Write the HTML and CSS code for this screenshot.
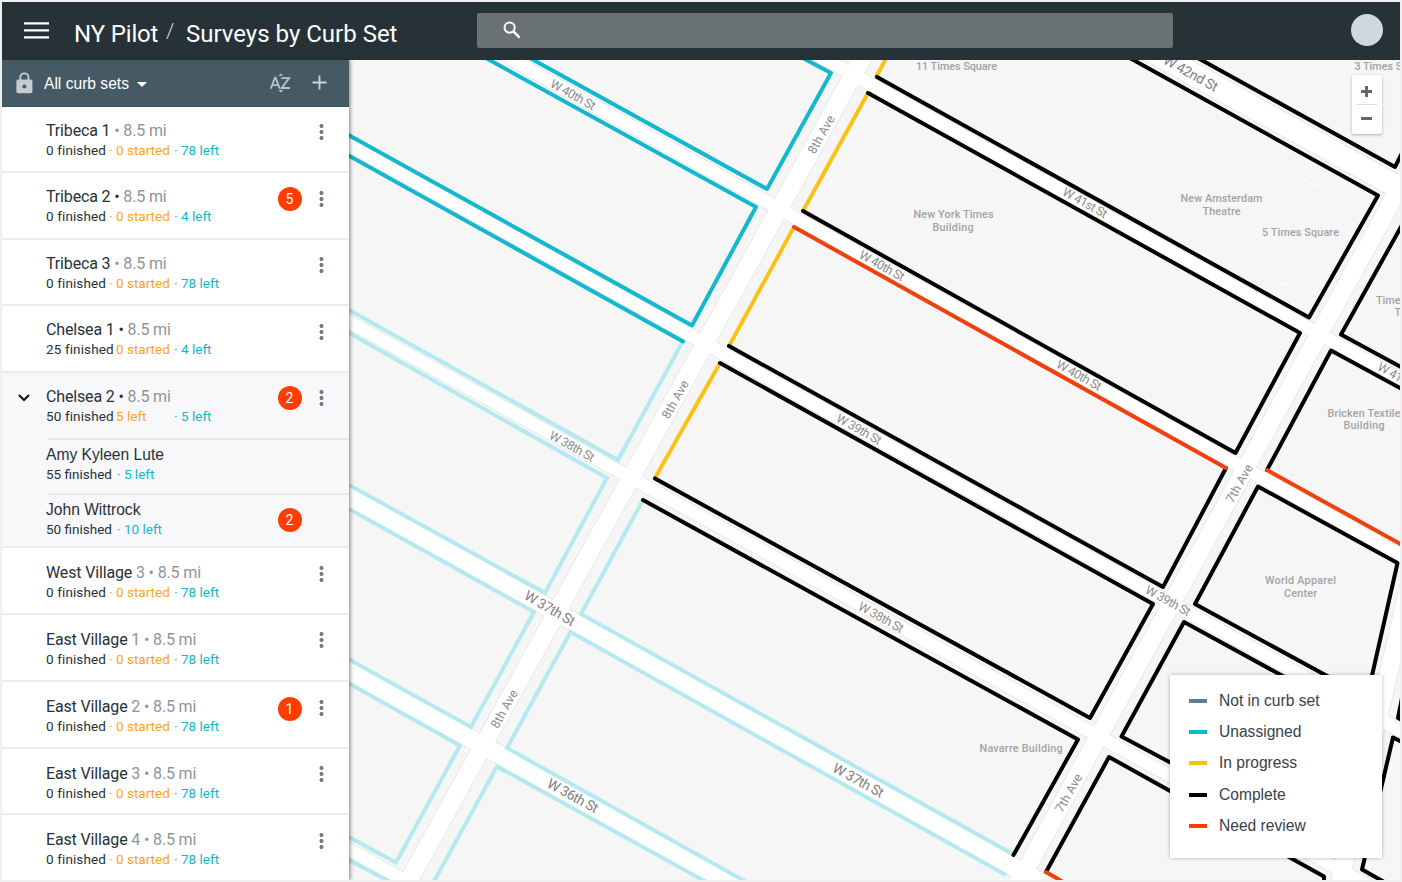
FILE: index.html
```html
<!DOCTYPE html>
<html lang="en">
<head>
<meta charset="utf-8">
<title>NY Pilot / Surveys by Curb Set</title>
<link rel="stylesheet" href="styles.css">
</head>
<body>
<div class="app">
  <header class="topbar">
    <svg class="menu" width="25" height="17" viewBox="0 0 25 17"><path d="M0 1.4h25M0 8.4h25M0 15.4h25" stroke="#fff" stroke-width="2.2"/></svg>
    <h1 class="crumbs"><span class="crumb-root">NY Pilot</span><span class="slash">/</span><span class="crumb-page">Surveys by Curb Set</span></h1>
    <div class="search"><svg width="18" height="18" viewBox="0 0 18 18" fill="none" stroke="#fff"><circle cx="6.6" cy="6.6" r="5.1" stroke-width="2"/><path d="M10.6 10.6l6 6" stroke-width="2.6"/></svg></div>
    <div class="avatar"></div>
  </header>
  <div class="body">
    <aside class="sidebar">
      <div class="filter">
        <svg class="lock" width="17" height="22" viewBox="0 0 17 22"><path d="M4.300 8V5.400a4.100 4.100 0 0 1 8.200 0V8" fill="none" stroke="#c5cdd1" stroke-width="1.800"/><rect x="0.400" y="7.400" width="16" height="13.800" rx="1.800" fill="#c5cdd1"/><circle cx="8.400" cy="14.400" r="2" fill="#455a64"/></svg>
        <span class="filter-label">All curb sets</span>
        <svg class="caret" width="10" height="5" viewBox="0 0 10 5"><path d="M0 0h10L5 5z" fill="#fff"/></svg>
        <svg class="sort" width="21" height="20" viewBox="0 0 21 20" fill="none" stroke="#b9c3c8" stroke-width="1.800"><path d="M.8 15.700L5 4.600h.6L9.800 15.700M2.300 12.200h6"/><path d="M11.300 5.100h7.800l-7.400 9.900h8.200" /><path d="M8.300 2.800L10.800 .4l2.500 2.400zM8.300 17l2.500 2.400L13.300 17z" fill="#b9c3c8" stroke="none"/></svg>
        <svg class="plus" width="15" height="15" viewBox="0 0 15 15"><path d="M7.500 .5v14M.5 7.500h14" stroke="#cfd6d9" stroke-width="1.800"/></svg>
      </div>
      <div class="row"><div class="info"><div class="name">Tribeca 1 <i>• 8.5 mi</i></div><div class="stats"><span class="done">0 finished</span><span class="started"><b>·</b>0 started</span><span class="left"><b>·</b>78 left</span></div></div><span class="kebab"></span></div>
      <div class="row"><div class="info"><div class="name">Tribeca 2 • <i>8.5 mi</i></div><div class="stats"><span class="done">0 finished</span><span class="started"><b>·</b>0 started</span><span class="left"><b>·</b>4 left</span></div></div><span class="badge">5</span><span class="kebab"></span></div>
      <div class="row"><div class="info"><div class="name">Tribeca 3 <i>• 8.5 mi</i></div><div class="stats"><span class="done">0 finished</span><span class="started"><b>·</b>0 started</span><span class="left"><b>·</b>78 left</span></div></div><span class="kebab"></span></div>
      <div class="row"><div class="info"><div class="name">Chelsea 1 • <i>8.5 mi</i></div><div class="stats"><span class="done">25 finished</span><span class="started"><b></b>0 started</span><span class="left"><b>·</b>4 left</span></div></div><span class="kebab"></span></div>
      <div class="row open"><svg class="chevron" width="12" height="8" viewBox="0 0 12 8"><path d="M1 1l5 5 5-5" fill="none" stroke="#111" stroke-width="2"/></svg><div class="info"><div class="name">Chelsea 2 • <i>8.5 mi</i></div><div class="stats"><span class="done">50 finished</span><span class="started"><b></b>5 left</span><span class="left"><b>·</b>5 left</span></div></div><span class="badge">2</span><span class="kebab"></span></div>
      <div class="child"><div class="info"><div class="name">Amy Kyleen Lute</div><div class="stats"><span>55 finished</span><span class="left"><b>·</b>5 left</span></div></div></div>
      <div class="child last"><div class="info"><div class="name">John Wittrock</div><div class="stats"><span>50 finished</span><span class="left"><b>·</b>10 left</span></div></div><span class="badge">2</span></div>
      <div class="row lower"><div class="info"><div class="name">West Village <i>3 • 8.5 mi</i></div><div class="stats"><span class="done">0 finished</span><span class="started"><b>·</b>0 started</span><span class="left"><b>·</b>78 left</span></div></div><span class="kebab"></span></div>
      <div class="row lower tall"><div class="info"><div class="name">East Village <i>1 • 8.5 mi</i></div><div class="stats"><span class="done">0 finished</span><span class="started"><b>·</b>0 started</span><span class="left"><b>·</b>78 left</span></div></div><span class="kebab"></span></div>
      <div class="row lower"><div class="info"><div class="name">East Village <i>2 • 8.5 mi</i></div><div class="stats"><span class="done">0 finished</span><span class="started"><b>·</b>0 started</span><span class="left"><b>·</b>78 left</span></div></div><span class="badge">1</span><span class="kebab"></span></div>
      <div class="row lower"><div class="info"><div class="name">East Village <i>3 • 8.5 mi</i></div><div class="stats"><span class="done">0 finished</span><span class="started"><b>·</b>0 started</span><span class="left"><b>·</b>78 left</span></div></div><span class="kebab"></span></div>
      <div class="row lower"><div class="info"><div class="name">East Village <i>4 • 8.5 mi</i></div><div class="stats"><span class="done">0 finished</span><span class="started"><b>·</b>0 started</span><span class="left"><b>·</b>78 left</span></div></div><span class="kebab"></span></div>
    </aside>
    <main class="map">
      <svg class="streets" width="1051" height="820" viewBox="349 60 1051 820">
        <defs>
          <g id="narrow"><path d="M764 25L1420 390"/><path d="M510 58.700L1420 566"/><path d="M340 140L1420 741.500"/><path d="M340 317L1420 914"/><path d="M340 844.500L420 889"/></g>
          <g id="wide"><path d="M340 491.500L1040 882"/><path d="M340 666L740 889"/></g>
          <g id="avenue"><path d="M873 39L403 891"/><path d="M1481 39L1014 891"/><path d="M1425 518L1338 890"/></g>
          <path id="w42" d="M1148 49L1420 199.600"/>
        </defs>
        <g fill="none" stroke="#e7e9e9">
          <use href="#narrow" stroke-width="14.500"/><use href="#wide" stroke-width="20"/><use href="#avenue" stroke-width="19.500"/><use href="#w42" stroke-width="24"/>
        </g>
        <g fill="none" stroke="#fff">
          <use href="#narrow" stroke-width="12.500"/><use href="#wide" stroke-width="18"/><use href="#avenue" stroke-width="17.500"/><use href="#w42" stroke-width="22"/>
        </g>
        <g class="paths">
          <path d="M724 217q1 6 6 4M733 220q6-3 12-4M797 239l16 8M1300 177l23 12M1278 288l8-6 4 5M1181 463l4-6M1252 512l5-10" stroke="#fff" stroke-width="1.500" stroke-dasharray="3 2"/>
        </g>
        <g class="curb assigned-soft">
          <path d="M349 310L618 460L683 341"/><path d="M349 333L607 478L545 593L349 485"/><path d="M349 509L534 612L471 727L349 659.500"/><path d="M349 683.500L460 745.500L396 862.500L349 837"/><path d="M340 855L390 882"/>
          <path d="M643 500L581 614L1013 854"/><path d="M1006 875L570.500 632L507 748L750 884"/><path d="M432 885L497 766.500L710 884"/>
        </g>
        <g class="curb unassigned">
          <path d="M800 56.500L831 73L767 189L529 57.500"/><path d="M484 57L756 207L692 325.500L345 133"/><path d="M345 153.500L683 341.500"/>
        </g>
        <g class="curb progress"><path d="M887 57L876 77M868 93L803 211M794 227L729 346M720 363L655 478"/></g>
        <g class="curb complete">
          <path d="M877 77L1309 317.500L1378 195.500L1128 57"/><path d="M868 93L1300 333L1235.500 453L803 211"/><path d="M1226 468L1163 587L729 346"/><path d="M720 363L1153 604L1090 718L655 478.500"/><path d="M643 500L1078 739.500L1013.500 855"/>
          <path d="M1196 57L1395 167L1402 153"/><path d="M1402 225L1341 334.500L1402 367.500"/><path d="M1402 389L1331 350.500L1267 470"/>
          <path d="M1371 680L1397.500 563L1258 486.500L1195 604L1340 683"/><path d="M1290 680L1184 622L1121.500 736.500L1190 773"/><path d="M1046 872L1109 757L1324 876.500V882"/>
          <path d="M1402 698L1398 718L1402 720"/><path d="M1402 742L1393 737.500L1362 869.500L1386 883"/>
        </g>
        <g class="curb review"><path d="M794 227L1226 468M1267 470L1404 546M1046 872L1070 886"/></g>
        <g class="street-name">
          <text transform="translate(571 98.500) rotate(29)" textLength="49.500">W 40th St</text>
          <text transform="translate(880 269.500) rotate(29)" textLength="49.500">W 40th St</text>
          <text transform="translate(1077 379) rotate(29)" textLength="49.500">W 40th St</text>
          <text transform="translate(1083 206.500) rotate(29)" textLength="49">W 41st St</text>
          <text transform="translate(857 433) rotate(29)" textLength="49.500">W 39th St</text>
          <text transform="translate(1166 604.500) rotate(29)" textLength="49.500">W 39th St</text>
          <text transform="translate(879 621) rotate(29)" textLength="49.500">W 38th St</text>
          <text transform="translate(570 450) rotate(29)" textLength="49.500">W 38th St</text>
          <text transform="translate(1398 381.500) rotate(29)" textLength="49">W 41st St</text>
          <g class="major">
            <text transform="translate(547.500 612.500) rotate(30)" textLength="56">W 37th St</text>
            <text transform="translate(856 784.500) rotate(29)" textLength="56">W 37th St</text>
            <text transform="translate(570.500 800) rotate(29)" textLength="56">W 36th St</text>
            <text transform="translate(1188.500 77.500) rotate(29)" textLength="60">W 42nd St</text>
          </g>
          <text transform="translate(825 136.500) rotate(-61)" textLength="42">8th Ave</text>
          <text transform="translate(679 401.500) rotate(-61)" textLength="42">8th Ave</text>
          <text transform="translate(508 711) rotate(-61)" textLength="42">8th Ave</text>
          <text transform="translate(1243 485.500) rotate(-61)" textLength="42">7th Ave</text>
          <text transform="translate(1072.500 795) rotate(-61)" textLength="42">7th Ave</text>
        </g>
        <g class="place">
          <text x="956.500" y="70" textLength="81">11 Times Square</text>
          <text x="1392" y="70" textLength="75">3 Times Square</text>
          <text x="953.500" y="218" textLength="80">New York Times</text><text x="953" y="230.500" textLength="41">Building</text>
          <text x="1221.500" y="202" textLength="82">New Amsterdam</text><text x="1221.500" y="214.500" textLength="38">Theatre</text>
          <text x="1300.500" y="236" textLength="77">5 Times Square</text>
          <g class="edge"><text x="1376" y="304">Time</text><text x="1394.500" y="316">T</text></g>
          <text x="1364" y="416.500" textLength="73">Bricken Textile</text><text x="1364" y="429" textLength="41">Building</text>
          <text x="1300.500" y="584" textLength="71">World Apparel</text><text x="1300.500" y="596.500" textLength="33">Center</text>
          <text x="1021" y="751.500" textLength="83">Navarre Building</text>
        </g>
      </svg>
      <div class="zoom"><button class="in"></button><hr><button class="out"></button></div>
      <ul class="legend">
        <li class="none">Not in curb set</li>
        <li class="un">Unassigned</li>
        <li class="prog">In progress</li>
        <li class="comp">Complete</li>
        <li class="rev">Need review</li>
      </ul>
    </main>
  </div>
</div>
</body>
</html>
```
FILE: styles.css
```css
* { box-sizing: border-box; }
body { margin: 0; font-family: Roboto, sans-serif; background: #efefef; }
.app { width: 1402px; height: 882px; padding: 2px; display: flex; flex-direction: column; overflow: hidden; }
.topbar { height: 57.5px; flex: none; background: #263238; display: flex; align-items: center; padding: 0 17px 0 22px; color: #fff; }
.menu { margin-right: 25px; flex: none; margin-top: -1px; }
.crumbs { margin: 6px 0 0; font-size: 24px; font-weight: 400; line-height: 30px; display: flex; white-space: nowrap; width: 403px; flex: none; }
.crumb-root { width: 92px; letter-spacing: -0.15px; }
.slash { width: 20px; font-weight: 300; color: #cfd6d9; font-size: 21px; line-height: 25px; }
.search { width: 696px; height: 35px; background: #697173; border-radius: 2px; display: flex; align-items: center; padding-left: 26px; flex: none; margin-top: -1px; }
.avatar { width: 32px; height: 32px; border-radius: 50%; background: #cfd8dc; margin: -1px 0 0 auto; }
.body { display: flex; flex: 1; min-height: 0; }
.sidebar { width: 347px; flex: none; background: #fff; box-shadow: 1px 0 4px rgba(0,0,0,.5); position: relative; z-index: 1; overflow: hidden; clip-path: inset(0 -6px 0 0); }
.filter { height: 47px; background: #455a64; border-bottom: 1px solid #3d5059; display: flex; align-items: center; padding: 0 22px 0 14px; color: #fff; font: 15.6px "Liberation Sans", Arial, sans-serif; }
.lock { margin-right: 11px; }
.filter-label { margin-top: 2px; }
.caret { margin: 3px 0 0 8px; }
.sort { margin-left: auto; margin-right: 21px; }
.row { height: 66.5px; border-bottom: 2px solid #ececec; display: flex; position: relative; padding: 13px 25px 0 44px; background: #fff; }
.row.lower { padding-top: 14px; }
.row.tall { height: 67.5px; }
.row.open { height: 65.5px; background: #f8f8fb; border-bottom: 0; }
.chevron { position: absolute; left: 16px; top: 21.5px; }
.info { flex: 1; }
.name { font-size: 16px; line-height: 22px; color: #263238; white-space: pre; letter-spacing: -0.15px; }
.name i { font-style: normal; color: #8f9499; }
.stats { font-size: 13.5px; line-height: 18px; color: #263238; display: flex; white-space: nowrap; margin-top: -1px; }
.stats b { font-weight: 400; display: inline-block; width: 7px; }
.done { width: 63px; letter-spacing: 0.12px; }
.started { width: 65px; color: #ffa31a; }
.left { color: #14b4cc; }
.badge { width: 24px; height: 24px; border-radius: 50%; background: #ff3d00; color: #fff; font-size: 14px; line-height: 24px; text-align: center; margin: 0.5px 17.5px 0 0; }
.kebab { width: 5px; height: 17px; margin-top: 3.5px; background: radial-gradient(circle at 50% 50%, #757b80 1.7px, transparent 2.3px) 0 0 / 5px 6px; }
.lower .kebab { margin-top: 2.5px; }
.child { height: 54.5px; background: #f8f8fb; display: flex; padding: 6px 47.5px 0 44px; position: relative; }
.child::before { content: ""; position: absolute; left: 46px; right: 0; top: 0; height: 2px; background: #e8e8ea; }
.child .name { font: 15.6px/22px "Liberation Sans", Arial, sans-serif; letter-spacing: 0; }
.child .stats { gap: 5px; }
.child .badge { margin: 9px 0 0; }
.child.last { height: 55.5px; border-bottom: 2px solid #ececec; }
.map { flex: 1; position: relative; overflow: hidden; background: #f6f6f6; }
.streets { display: block; margin-top: 0.5px; }
.curb { fill: none; stroke-width: 4; stroke-linejoin: miter; }
.assigned-soft { stroke: #b3e9ef; }
.unassigned { stroke: #12b8d0; stroke-linejoin: round; stroke-linecap: round; }
.progress { stroke: #fbc116; }
.complete { stroke: #000; stroke-linecap: round; stroke-linejoin: round; }
.review { stroke: #f0400e; stroke-linecap: round; }
.paths { fill: none; }
.street-name { font-family: Roboto, sans-serif; font-size: 12.5px; fill: #8d8d8d; text-anchor: middle; }
.major { font-size: 14px; fill: #808080; }
.place { font-family: Roboto, sans-serif; font-size: 10.8px; font-weight: 500; fill: #a3a3a3; text-anchor: middle; }
.edge { text-anchor: start; }
.zoom { position: absolute; left: 1003px; top: 15.5px; width: 30px; height: 59px; background: #fff; border-radius: 2px; box-shadow: 0 1px 3px rgba(0,0,0,.3); display: flex; flex-direction: column; align-items: center; }
.zoom button { border: 0; padding: 0; width: 30px; height: 30px; background: linear-gradient(#666, #666) 9px 12px / 11px 3px no-repeat; }
.zoom .in { background: linear-gradient(#666, #666) 9px 15px / 11px 3px no-repeat, linear-gradient(#666, #666) 13px 11px / 3px 11px no-repeat; }
.zoom hr { width: 20px; height: 1px; border: 0; margin: 0; background: #ddd; flex: none; }
.legend { position: absolute; left: 821px; top: 615.5px; width: 212px; height: 183px; background: #fff; margin: 0; padding: 10px 0 0 19px; list-style: none; box-shadow: 0 0 4px rgba(0,0,0,.3); font: 15.6px "Liberation Sans", Arial, sans-serif; color: #37424a; }
.legend li { height: 31.3px; display: flex; align-items: center; gap: 12px; }
.legend li::before { content: ""; width: 18px; height: 4px; background: currentColor; }
.legend .none::before { background: #607d8b; }
.legend .un::before { background: #00bcd4; }
.legend .prog::before { background: #ffc107; }
.legend .comp::before { background: #000; }
.legend .rev::before { background: #ff3d00; }
```
